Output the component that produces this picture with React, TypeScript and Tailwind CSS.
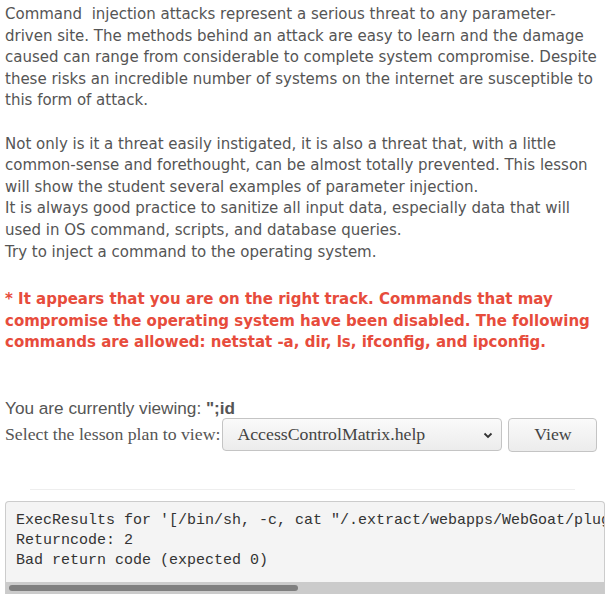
import React from 'react';

const lessons = ['AccessControlMatrix.help', 'BackDoors.help', 'CommandInjection.help', 'SqlInjection.help'];

export default function App() {
    return (
        <div className="w-[610px] h-[603px] overflow-hidden bg-white pl-[5px] pr-[5px] pt-[4px]">
            {/* lesson intro */}
            <div className="w-[597px] font-['DejaVu_Sans',sans-serif] text-[15px] leading-[21.6px] text-[#555]">
                <p>
                    Command&nbsp; injection attacks represent a serious threat to any parameter-driven site. The methods
                    behind an attack are easy to learn and the damage caused can range from considerable to complete
                    system compromise. Despite these risks an incredible number of systems on the internet are
                    susceptible to this form of attack.
                    <br />
                    <br />
                    Not only is it a threat easily instigated, it is also a threat that, with a little common-sense and
                    forethought, can be almost totally prevented. This lesson will show the student several examples of
                    parameter injection.
                    <br />
                    It is always good practice to sanitize all input data, especially data that will used in OS
                    command, scripts, and database queries.
                    <br />
                    Try to inject a command to the operating system.
                </p>
                <p className="mt-[26px] font-bold text-[#e74c3c] leading-[21.5px]">
                    * It appears that you are on the right track. Commands that may compromise the operating system have
                    been disabled. The following commands are allowed: netstat -a, dir, ls, ifconfig, and ipconfig.
                </p>
            </div>

            <div className="mt-[44px] font-['Liberation_Sans',Arial,sans-serif] text-[17.2px] leading-[20px] text-[#555]">
                You are currently viewing: <b>&quot;;id</b>
            </div>

            {/* lesson plan picker */}
            <div className="mt-[0px] flex items-center font-['Liberation_Serif','Times_New_Roman',serif] text-[17.75px] text-[#555]">
                <span className="mr-[2px]">Select the lesson plan to view:</span>
                <div className="relative w-[280px] h-[33px] rounded-[4px] border border-[#c4c4c4] bg-gradient-to-b from-[#fafafa] to-[#ececec]">
                    <select
                        defaultValue={lessons[0]}
                        className="w-full h-full appearance-none bg-transparent pl-[14px] pr-[30px] text-[#444] outline-none"
                    >
                        {lessons.map((l) => (
                            <option key={l}>{l}</option>
                        ))}
                    </select>
                    <svg
                        className="pointer-events-none absolute right-[8px] top-[13px]"
                        width="10"
                        height="7"
                        viewBox="0 0 10 7"
                        fill="none"
                    >
                        <path d="M1.5 1.5 L5 5 L8.5 1.5" stroke="#333" strokeWidth="1.8" />
                    </svg>
                </div>
                <button className="ml-[6px] w-[89px] h-[34px] rounded-[4px] border border-[#c4c4c4] bg-gradient-to-b from-[#fafafa] to-[#ececec] text-[#444]">
                    View
                </button>
            </div>

            <hr className="mt-[37px] ml-[25px] mr-[30px] border-t border-[#eee]" />

            {/* exec output */}
            <div className="mt-[11px] rounded-t-[4px] border-x border-t border-[#ccc] bg-[#f4f4f4] overflow-hidden">
                <pre className="px-[10px] pt-[9px] pb-[11px] font-['Liberation_Mono','Courier_New',monospace] text-[15px] leading-[20px] text-[#333] whitespace-pre overflow-hidden">
                    {`ExecResults for '[/bin/sh, -c, cat "/.extract/webapps/WebGoat/plugin_extracted/plugin/CommandInjection/lessonPlans/en/";id.html"]'
Returncode: 2
Bad return code (expected 0)`}
                </pre>
                <div className="h-[12px] bg-[#cbcbcb] flex items-center px-[3px]">
                    <div className="h-[6px] w-[289px] rounded-full bg-[#7f7f7f]" />
                </div>
            </div>
        </div>
    );
}
